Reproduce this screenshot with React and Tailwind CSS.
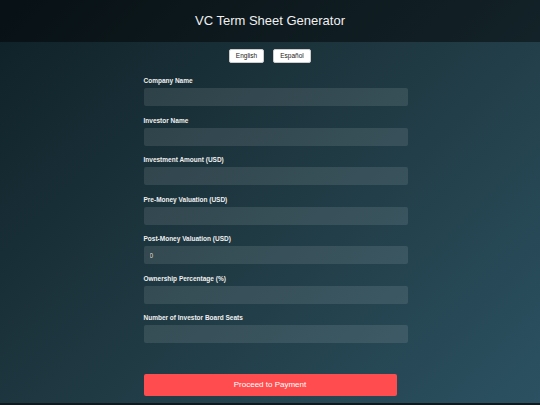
const fields = [
  { label: "Company Name", value: "" },
  { label: "Investor Name", value: "" },
  { label: "Investment Amount (USD)", value: "" },
  { label: "Pre-Money Valuation (USD)", value: "" },
  { label: "Post-Money Valuation (USD)", value: "0" },
  { label: "Ownership Percentage (%)", value: "" },
  { label: "Number of Investor Board Seats", value: "" },
];

export default function App() {
  return (
    <div
      className="w-full bg-[linear-gradient(135deg,#0f2027,#203a43,#2c5364)] text-white"
      style={{ fontFamily: '"Liberation Sans", Arial, sans-serif' }}
    >
      <header className="h-[42px] flex items-center justify-center bg-black/45">
        <h1 className="text-[13px] font-normal text-[#f0f0f0]">VC Term Sheet Generator</h1>
      </header>

      <div className="flex justify-center gap-[9px] pt-[7px]">
        <button className="h-[14px] w-[35px] rounded-[2px] bg-white border border-[#ccc] text-[6.5px] text-[#222] leading-none">
          English
        </button>
        <button className="h-[14px] w-[38px] rounded-[2px] bg-white border border-[#ccc] text-[6.5px] text-[#222] leading-none">
          Español
        </button>
      </div>

      <form className="w-[253px] mx-auto pt-[14px]">
        {fields.map((f) => (
          <div key={f.label} className="mb-[10.5px]">
            <label className="block text-[6.5px] leading-[8px] font-bold text-[#f0f0f0] mb-[3px]">
              {f.label}
            </label>
            <input
              readOnly
              value={f.value}
              className="block w-[264px] h-[18px] rounded-[2px] bg-white/10 px-[6px] text-[6.5px] text-[#ddd] outline-none border-0"
            />
          </div>
        ))}
        <button
          type="button"
          className="mt-[20px] w-[253px] h-[22px] rounded-[2px] bg-[#ff4d4f] text-[8px] text-white"
        >
          Proceed to Payment
        </button>
      </form>

      <div className="h-[7px]" />
      <footer className="h-[30px] bg-[#10191d]" />
    </div>
  );
}
